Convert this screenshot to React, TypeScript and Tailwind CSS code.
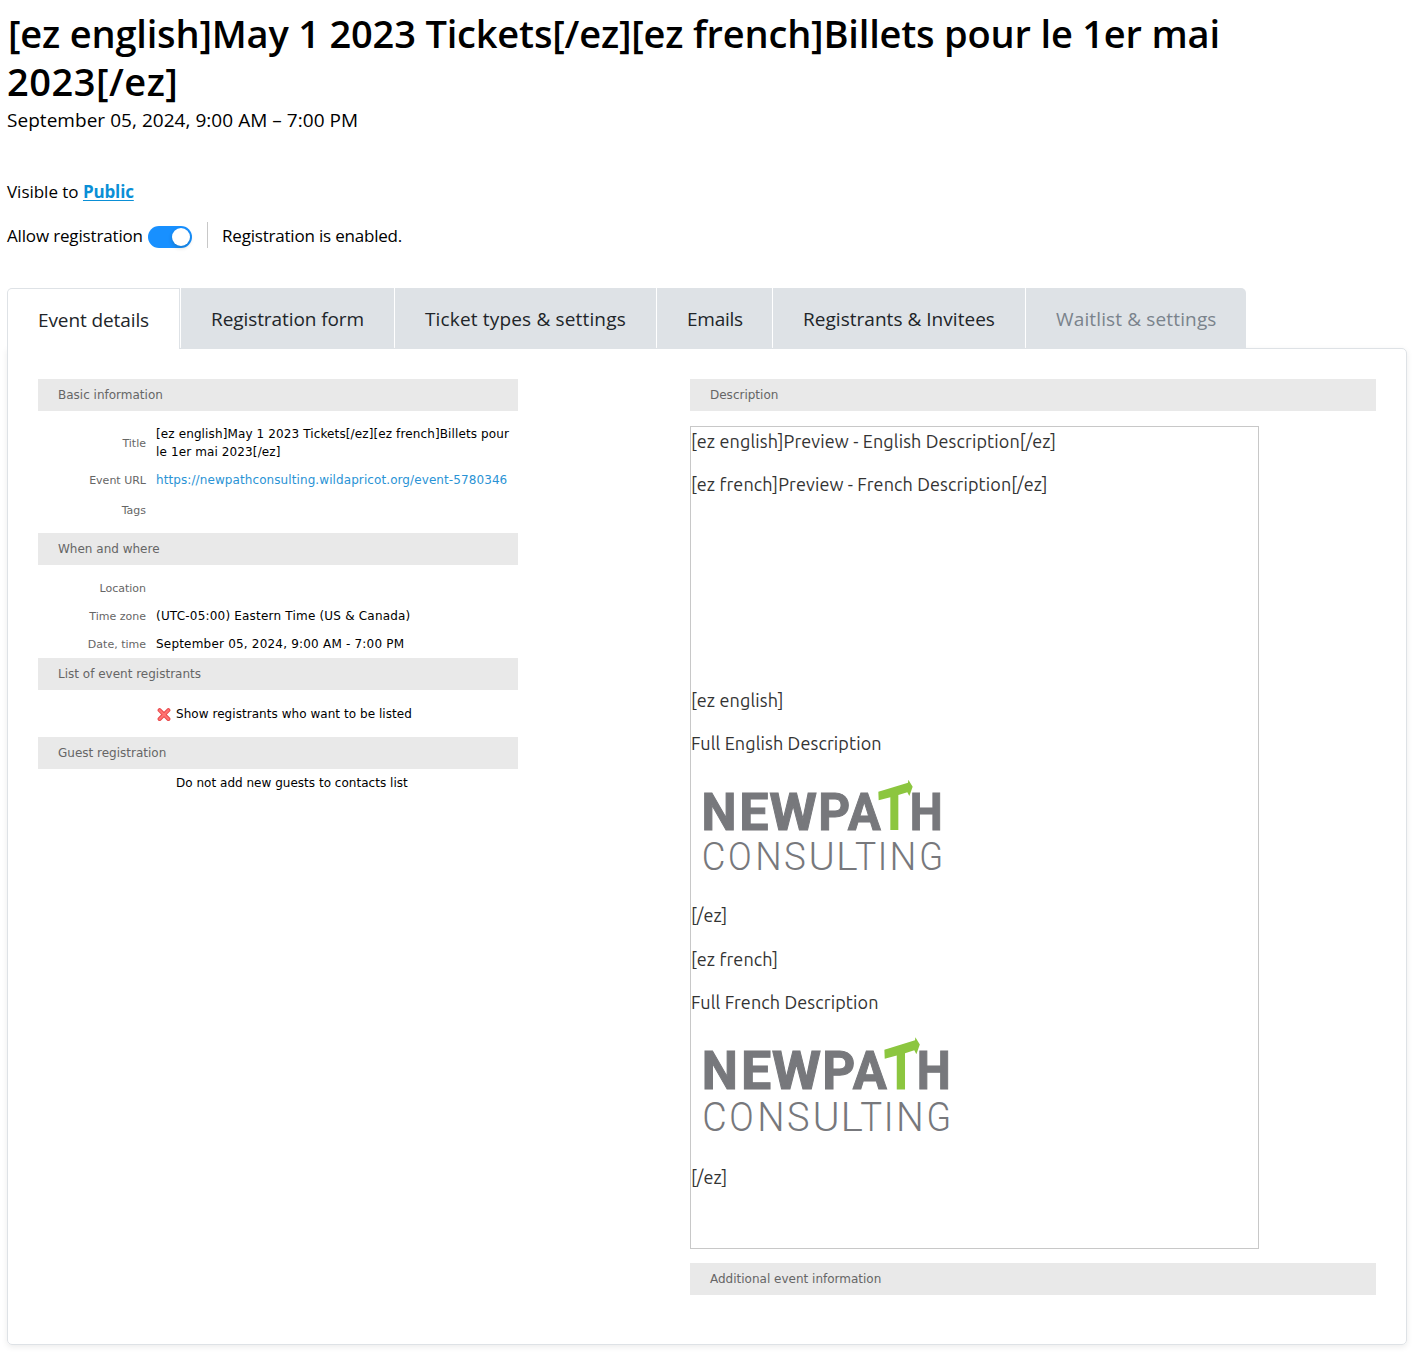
import type { ReactNode } from 'react';

const UI = "font-['Open_Sans','Segoe_UI',sans-serif]";
const FORM = "font-['DejaVu_Sans',Verdana,sans-serif]";

/* char, ink left, ink right, left bearing, ink width (bearing and width in 1/2048 em) */
type Glyph = [string, number, number, number, number];
const BOLD: Glyph[] = [
  ['N', 43, 130, 117, 1198],
  ['E', 157, 231, 117, 971],
  ['W', 240, 378, 28, 1726],
  ['P', 393, 476, 117, 1141],
  ['A', 474, 572, 11, 1361],
  ['H', 667, 750, 117, 1214],
];
const LIGHT: Glyph[] = [
  ['C', 42, 101, 120, 1105],
  ['O', 120, 180, 118, 1172],
  ['N', 205, 266, 170, 1117],
  ['S', 287, 343, 90, 1040],
  ['U', 364, 425, 140, 1040],
  ['L', 448, 501, 170, 880],
  ['T', 497, 556, 45, 1135],
  ['I', 573, 578.5, 190, 100],
  ['N', 608, 670, 170, 1117],
  ['G', 694, 751, 125, 1120],
];

function Letters({ glyphs, size, y }: { glyphs: Glyph[]; size: number; y: number }) {
  return (
    <>
      {glyphs.map(([ch, l, r, bearing, ink], i) => {
        const em = size / 2048;
        const sx = (r - l) / (ink * em);
        return (
          <text key={i} fontSize={size} transform={`translate(${l - bearing * em * sx} ${y}) scale(${sx} 1)`}>
            {ch}
          </text>
        );
      })}
    </>
  );
}

function Logo({ className }: { className: string }) {
  return (
    <svg className={className} viewBox="3 0 837 360" preserveAspectRatio="none" role="img" aria-label="NewPath Consulting">
      <g fill="#77787c" fontFamily="Roboto, sans-serif" fontWeight={700} stroke="#77787c" strokeWidth={3}>
        <Letters glyphs={BOLD} size={156} y={195} />
      </g>
      <g fill="#77787c" fontFamily="Roboto, sans-serif" fontWeight={300}>
        <Letters glyphs={LIGHT} size={118} y={314} />
      </g>
      <path fill="#8cc63f" d="M565 80 L654 53 L655 44 L668 65 L658 93 L652 82 L625 90 V195 H601 V97 L566 106 Z" />
    </svg>
  );
}

function Bar({ children }: { children: ReactNode }) {
  return <h2 className="h-8 bg-[#e9e9e9] pl-5 text-[12px] leading-8 text-[#666]">{children}</h2>;
}

function Row({ label, className, children }: { label?: string; className: string; children?: ReactNode }) {
  return (
    <div className={`flex items-center ${className}`}>
      <div className="w-[108px] shrink-0 pt-0.5 text-right text-[11px] leading-4 text-[#666]">{label}</div>
      <div className="ml-[10px] text-[12px] leading-[18px] whitespace-nowrap text-black">{children}</div>
    </div>
  );
}

function Cross() {
  return (
    <svg className="mr-[5px] h-[15px] w-[15px]" viewBox="0 0 15 15">
      <path d="M3.6 3.2 L12.4 12 M12.4 3.2 L3.6 12" stroke="#e8474a" strokeWidth="4" strokeLinecap="round" />
      <path d="M3.6 3.2 L12.4 12 M12.4 3.2 L3.6 12" stroke="#ff7371" strokeWidth="2.2" strokeLinecap="round" />
    </svg>
  );
}

const TABS = [
  { label: 'Registration form', box: 'w-[213px]', text: 'tracking-[-0.08px]' },
  { label: 'Ticket types & settings', box: 'w-[261px]', text: 'tracking-[0.16px]' },
  { label: 'Emails', box: 'w-[115px]', text: 'tracking-[-0.25px]' },
  { label: 'Registrants & Invitees', box: 'w-[252px]', text: 'tracking-[0.03px]' },
  { label: 'Waitlist & settings', box: 'w-[220px] rounded-tr-[5px]', text: 'tracking-[0.14px] text-[#7a838c]' },
];

export default function App() {
  return (
    <div className={`h-[1359px] overflow-hidden bg-white pt-[9px] pr-[10px] pl-[7px] text-black ${UI}`}>
      <h1 className="text-[38px] leading-[48px] font-semibold whitespace-nowrap">
        <span className="block pl-px tracking-[-0.18px]">[ez english]May 1 2023 Tickets[/ez][ez french]Billets pour le 1er mai</span>
        <span className="block tracking-[0.5px]">2023[/ez]</span>
      </h1>
      <p className="text-[19px] leading-[30px] tracking-[0.04px]">September 05, 2024, 9:00 AM – 7:00 PM</p>

      <p className="mt-[43px] text-[17px] leading-7 tracking-[-0.02px]">
        Visible to <a className="font-bold tracking-[-0.15px] text-[#0a8fd6] underline decoration-1 underline-offset-2">Public</a>
      </p>
      <div className="mt-4 flex h-[27px] text-[17px] leading-[27px]">
        <span className="w-[141px] tracking-[-0.16px]">Allow registration</span>
        <span className="mt-1 flex h-[22px] w-11 justify-end rounded-full bg-[#1890ff] p-[2px]">
          <span className="h-[18px] w-[18px] rounded-full bg-white shadow-[0_2px_4px_rgba(0,35,11,0.2)]" />
        </span>
        <span className="ml-[15px] h-[26px] w-px bg-[#c8c8c8]" />
        <span className="ml-[14px] tracking-[-0.2px]">Registration is enabled.</span>
      </div>

      <nav className="relative mt-[39px] flex h-[61px] gap-px text-[19px] text-[#212529]">
        <div className="h-[61px] w-[173px] rounded-tl-[5px] border border-b-0 border-[#dee2e6] bg-white pl-[30px] leading-[62px] tracking-[-0.1px]">
          Event details
        </div>
        {TABS.map((t) => (
          <div key={t.label} className={`h-[60px] bg-[#dee2e6] pl-[30px] leading-[62px] whitespace-nowrap ${t.box} ${t.text}`}>
            {t.label}
          </div>
        ))}
      </nav>

      <main className={`-mt-px flex h-[997px] rounded-[5px] rounded-tl-none border border-[#dee2e6] pt-[30px] pl-[30px] shadow-[0_2px_6px_rgba(0,0,0,0.08)] ${FORM}`}>
        <section className="w-[480px]">
          <Bar>Basic information</Bar>
          <div className="pt-[10px] pb-2">
            <Row label="Title" className="h-11">
              <span className="block tracking-[0.12px]">[ez english]May 1 2023 Tickets[/ez][ez french]Billets pour</span>
              <span className="block tracking-[0.12px]">le 1er mai 2023[/ez]</span>
            </Row>
            <Row label="Event URL" className="h-[30px]">
              <a className="tracking-[0.09px] text-[#2a93d5]">https://newpathconsulting.wildapricot.org/event-5780346</a>
            </Row>
            <Row label="Tags" className="h-[30px]" />
          </div>
          <Bar>When and where</Bar>
          <div className="pt-[9px]">
            <Row label="Location" className="h-7" />
            <Row label="Time zone" className="h-7">
              <span className="tracking-[0.2px]">(UTC-05:00) Eastern Time (US &amp; Canada)</span>
            </Row>
            <Row label="Date, time" className="h-7">
              <span className="tracking-[0.2px]">September 05, 2024, 9:00 AM - 7:00 PM</span>
            </Row>
          </div>
          <Bar>List of event registrants</Bar>
          <Row className="h-[47px] pt-px">
            <span className="flex items-center tracking-[0.05px]">
              <Cross />
              Show registrants who want to be listed
            </span>
          </Row>
          <Bar>Guest registration</Bar>
          <Row className="h-7">
            <span className="pl-5 tracking-[0.02px]">Do not add new guests to contacts list</span>
          </Row>
        </section>

        <section className="ml-[172px] w-[686px]">
          <Bar>Description</Bar>
          <div className="mt-[15px] h-[823px] w-[569px] border border-[#c8c8c8] pt-px font-[Ubuntu,'Open_Sans',sans-serif] text-[18px] leading-[27px] tracking-[0.12px] text-[#333]">
            <p>[ez english]Preview - English Description[/ez]</p>
            <p className="mt-4">[ez french]Preview - French Description[/ez]</p>
            <p className="mt-[189px]">[ez english]</p>
            <p className="mt-4">Full English Description</p>
            <Logo className="mt-2 h-[120px] w-[279px]" />
            <p className="mt-[17px]">[/ez]</p>
            <p className="mt-[17px]">[ez french]</p>
            <p className="mt-4">Full French Description</p>
            <Logo className="mt-1.5 h-[124.5px] w-[288px]" />
            <p className="mt-[17.5px]">[/ez]</p>
          </div>
          <div className="mt-[14px]">
            <Bar>Additional event information</Bar>
          </div>
        </section>
      </main>
    </div>
  );
}
